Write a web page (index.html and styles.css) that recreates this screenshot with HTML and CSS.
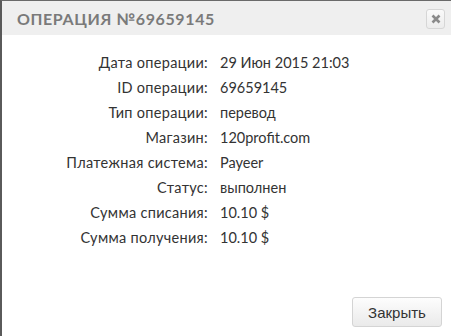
FILE: index.html
```html
<!DOCTYPE html>
<html lang="ru">
<head>
<meta charset="utf-8">
<link rel="stylesheet" href="styles.css">
</head>
<body>
<div class="modal">
  <div class="modal-header">
    <div class="modal-title">ОПЕРАЦИЯ №69659145</div>
    <button class="close-btn" aria-label="close">
      <svg width="10" height="10" viewBox="0 0 10 10"><path d="M1.5 1.5 L8.5 8.5 M8.5 1.5 L1.5 8.5" stroke="#8a8a8a" stroke-width="2.6" stroke-linecap="butt"/></svg>
    </button>
  </div>
  <div class="modal-body">
    <div class="details">
      <div class="label">Дата операции:</div><div class="value">29 Июн 2015 21:03</div>
      <div class="label">ID операции:</div><div class="value">69659145</div>
      <div class="label">Тип операции:</div><div class="value">перевод</div>
      <div class="label">Магазин:</div><div class="value">120profit.com</div>
      <div class="label">Платежная система:</div><div class="value">Payeer</div>
      <div class="label">Статус:</div><div class="value">выполнен</div>
      <div class="label">Сумма списания:</div><div class="value">10.10 $</div>
      <div class="label">Сумма получения:</div><div class="value">10.10 $</div>
    </div>
  </div>
  <div class="modal-footer">
    <button class="btn">Закрыть</button>
  </div>
</div>
</body>
</html>
```
FILE: styles.css
```css
html, body {
  margin: 0;
  padding: 0;
  background: #fff;
}
.modal {
  width: 451px;
  height: 336px;
  box-sizing: border-box;
  border-left: 2px solid #5a5a5a;
  border-top: 1px solid #6a6a6a;
  display: flex;
  flex-direction: column;
  background: #fff;
  font-family: "Lato", "Noto Sans", sans-serif;
}
.modal-header {
  height: 34px;
  background: #efefef;
  display: flex;
  align-items: center;
  justify-content: space-between;
  padding: 0 6px 0 15px;
}
.modal-title {
  font-family: "Lato", sans-serif;
  font-weight: 700;
  font-size: 16px;
  letter-spacing: 0.6px;
  color: #7a7a7a;
  margin-top: 1px;
}
.close-btn {
  width: 19px;
  height: 20px;
  margin-top: 2px;
  padding: 0;
  border: 1px solid #d6d6d6;
  border-radius: 3px;
  background: linear-gradient(#fafafa, #ececec);
  display: flex;
  align-items: center;
  justify-content: center;
}
.modal-body {
  flex: 1;
  padding-top: 15px;
}
.details {
  display: grid;
  grid-template-columns: 206px auto;
  column-gap: 12px;
  grid-auto-rows: 25px;
  align-items: center;
  font-family: "Lato", sans-serif;
  font-size: 14.5px;
  color: #333;
}
.label {
  text-align: right;
  letter-spacing: 0.3px;
}
.modal-footer {
  display: flex;
  justify-content: flex-end;
  padding: 0 9px 9px 0;
}
.btn {
  width: 90px;
  height: 30px;
  border: 1px solid #d4d4d4;
  border-radius: 3px;
  background: linear-gradient(#fdfdfd, #eaeaea);
  font-family: "Liberation Sans", Arial, sans-serif;
  font-size: 15px;
  color: #333;
  padding: 0;
}
```
